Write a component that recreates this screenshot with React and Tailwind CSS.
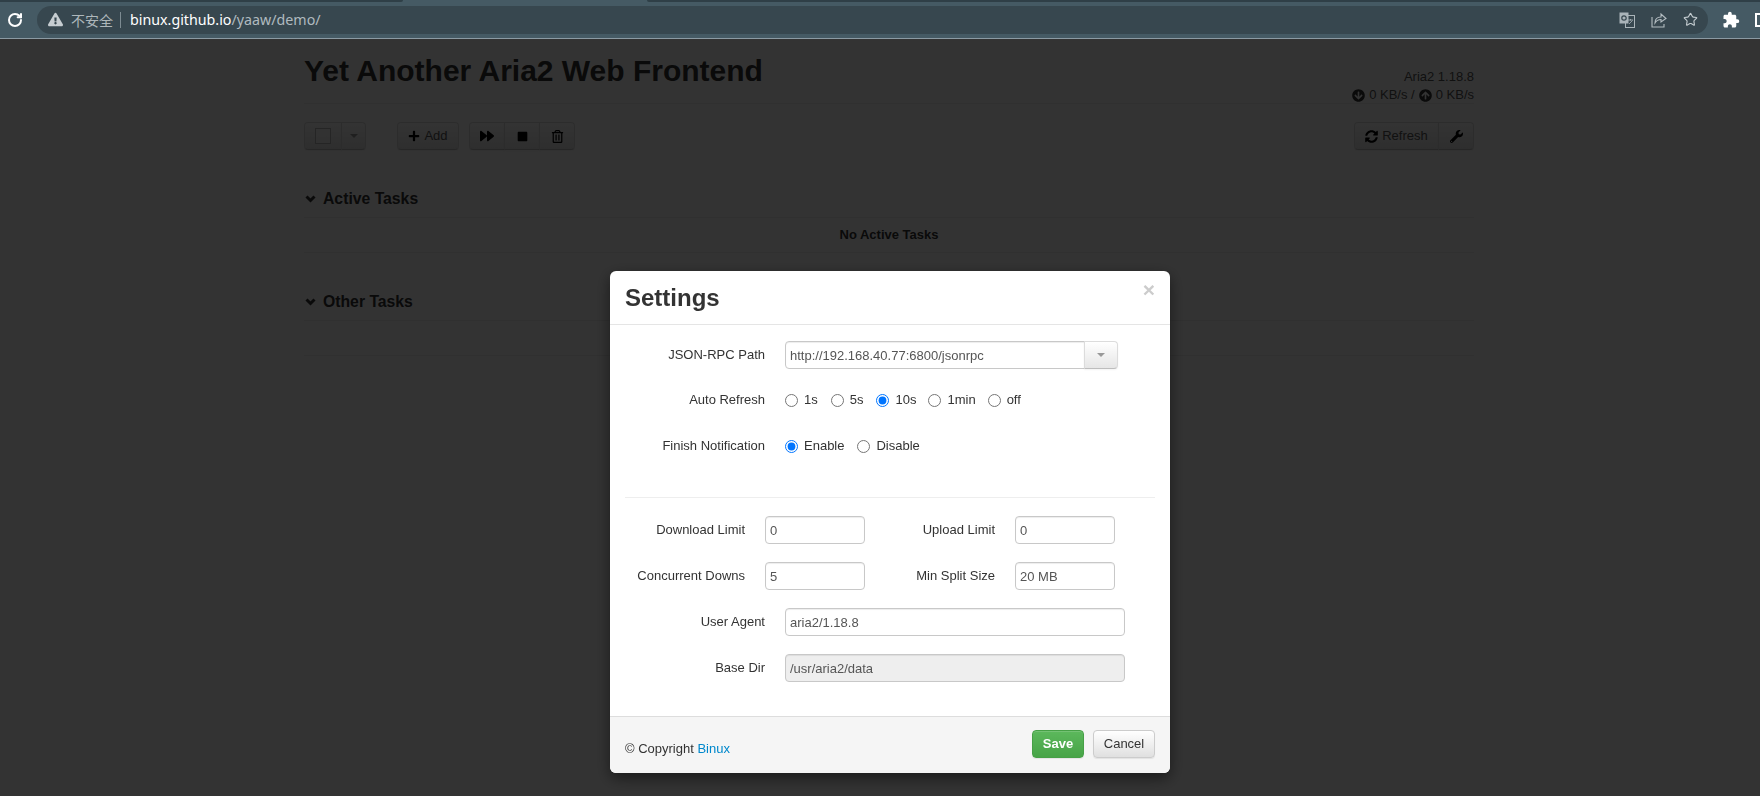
import { RotateCw, Star } from 'lucide-react'
import {
  FaArrowCircleDown,
  FaArrowCircleUp,
  FaExclamationTriangle,
  FaForward,
  FaPlus,
  FaRegTrashAlt,
  FaStop,
  FaSyncAlt,
  FaWrench,
} from 'react-icons/fa'
import { MdExtension } from 'react-icons/md'

const btn =
  'h-[28px] flex items-center justify-center border border-[#dcdcdc] border-b-[#bdbdbd] bg-gradient-to-b from-white to-[#e6e6e6] text-[#555] text-[13px] shadow-[inset_0_1px_0_rgba(255,255,255,0.2),0_1px_2px_rgba(0,0,0,0.05)]'

function Caret() {
  return <span className="w-0 h-0 border-x-[4px] border-x-transparent border-t-[4px] border-t-[#999]" />
}

function BrowserBar() {
  return (
    <div className="relative z-20 h-[39px] bg-[#455a64] border-b border-[#8b9aa3] flex flex-col">
      <div className="h-[2px] flex justify-between shrink-0">
        <div className="w-[403px] bg-[#2f3f47] rounded-br-md" />
        <div className="w-[1113px] bg-[#2f3f47] rounded-bl-md" />
      </div>
      <div className="flex items-center flex-1 min-h-0 pb-[1px]">
        <div className="w-[37px] flex justify-start pl-[7px] shrink-0">
          <RotateCw size={16} strokeWidth={3} className="text-white" />
        </div>
        <div className="w-[1671px] h-[28px] rounded-full bg-[#37474f] flex items-center pl-[11px] pr-[8px] shrink-0">
          <FaExclamationTriangle size={15} className="text-[#c6cdd1] mr-[8px]" />
          <span className="text-[14px] text-[#aeb7bb] font-['Noto_Sans_CJK_SC',sans-serif] mr-[7px] leading-none">不安全</span>
          <span className="w-px h-[16px] bg-[#7d8b92] mr-[9px]" />
          <span className="text-[14.25px] text-white font-['Noto_Sans',sans-serif]">binux.github.io</span>
          <span className="text-[14.25px] text-[#b0babf] font-['Noto_Sans',sans-serif]">/yaaw/demo/</span>
          <div className="ml-auto flex items-center gap-[16px] pr-[2px]">
            <svg width="16" height="16" viewBox="0 0 16 16" className="text-[#aab4b9]">
              <rect x="0.5" y="0.5" width="9" height="11" fill="currentColor" />
              <rect x="6.5" y="3.5" width="9" height="12" fill="none" stroke="currentColor" />
              <circle cx="5" cy="6" r="2.2" fill="none" stroke="#37474f" strokeWidth="1.2" />
              <path d="M9 8h5M11.5 7v1.5M10 12l3.5-3.5" stroke="currentColor" strokeWidth="0.8" fill="none" />
            </svg>
            <svg width="16" height="16" viewBox="0 0 16 16" fill="none" stroke="#b4bdc2" strokeWidth="1.1">
              <path d="M1 5v10h12v-3" />
              <path d="M4 11c0-4 2.5-6 6-6V2l5 4.500L10 10V7.500C7.500 7.500 5.500 8.500 4 11z" />
            </svg>
            <Star size={15} strokeWidth={1.8} className="text-[#c3cbcf]" />
          </div>
        </div>
        <div className="ml-[14px] shrink-0">
          <MdExtension size={18} className="text-white" />
        </div>
        <div className="ml-[15px] w-[12px] h-[14px] border-2 border-white shrink-0" />
      </div>
    </div>
  )
}

function TaskSection({ title, empty }) {
  return (
    <section className="mb-[39px]">
      <div className="h-[29px] flex items-start border-b border-[#eee]">
        <svg width="11" height="9" viewBox="0 0 11 9" fill="none" className="mt-[6px] ml-[1px] mr-[7px]">
          <path d="M1.500 1.500L5.500 5.500L9.500 1.500" stroke="#333" strokeWidth="3" />
        </svg>
        <h3 className="text-[15.75px] font-bold text-[#333] leading-[20px]">{title}</h3>
      </div>
      <div className="h-[35px] flex items-center justify-center border-b border-[#eee] text-[13px] font-bold text-[#333]">
        {empty}
      </div>
    </section>
  )
}

function BackgroundPage() {
  return (
    <div className="ml-[304px] w-[1170px]">
      <header className="h-[65px] border-b border-[#eee] flex justify-between">
        <h1 className="text-[30px] font-bold text-[#333] leading-[36px] mt-[14px]">Yet Another Aria2 Web Frontend</h1>
        <div className="text-right text-[13px] leading-[18px] text-[#555] pt-[29px]">
          <div>Aria2 1.18.8</div>
          <div className="flex items-center justify-end">
            <FaArrowCircleDown size={13} className="mr-[4px] text-[#333]" />0 KB/s /
            <FaArrowCircleUp size={13} className="mx-[4px] text-[#333]" />0 KB/s
          </div>
        </div>
      </header>

      <div className="mt-[18px] flex h-[28px]">
        <div className="flex">
          <div className={`${btn} w-[38px] rounded-l-[4px]`}>
            <span className="w-[16px] h-[16px] border border-[#bbb] bg-white/40" />
          </div>
          <div className={`${btn} w-[25px] -ml-px rounded-r-[4px]`}>
            <Caret />
          </div>
        </div>
        <button className={`${btn} w-[62px] ml-[31px] rounded-[4px] gap-[4px]`}>
          <FaPlus size={12} className="text-black" />
          Add
        </button>
        <div className="flex ml-[10px]">
          <button className={`${btn} w-[36px] rounded-l-[4px]`}>
            <FaForward size={14} className="text-black" />
          </button>
          <button className={`${btn} w-[36px] -ml-px`}>
            <FaStop size={11} className="text-black" />
          </button>
          <button className={`${btn} w-[36px] -ml-px rounded-r-[4px]`}>
            <FaRegTrashAlt size={13} className="text-black" />
          </button>
        </div>
        <div className="flex ml-auto">
          <button className={`${btn} w-[85px] rounded-l-[4px] gap-[4px]`}>
            <FaSyncAlt size={13} className="text-black" />
            Refresh
          </button>
          <button className={`${btn} w-[36px] -ml-px rounded-r-[4px]`}>
            <FaWrench size={13} className="text-black" />
          </button>
        </div>
      </div>

      <div className="mt-[39px]">
        <TaskSection title="Active Tasks" empty="No Active Tasks" />
        <TaskSection title="Other Tasks" empty="" />
      </div>
    </div>
  )
}

const inputCls =
  'h-[28px] border border-[#c8c8c8] rounded-[4px] px-[4px] text-[13px] text-[#555] shadow-[inset_0_1px_1px_rgba(0,0,0,0.075)] outline-none'

function Field({ label, value, labelW = 'w-[140px]', inputW = 'w-[340px]', disabled }) {
  return (
    <div className="flex items-center h-[28px]">
      <label className={`${labelW} text-right text-[13px] text-[#333] shrink-0 mr-[20px]`}>{label}</label>
      <input
        readOnly
        disabled={disabled}
        value={value}
        className={`${inputCls} ${inputW} ${disabled ? 'bg-[#eee]' : 'bg-white'}`}
      />
    </div>
  )
}

function RadioRow({ label, name, options, checked, gaps }) {
  return (
    <div className="flex items-center h-[28px]">
      <label className="w-[140px] text-right text-[13px] text-[#333] shrink-0 mr-[20px]">{label}</label>
      {options.map((o, i) => (
        <label key={o} className="flex items-center text-[13px] text-[#333]" style={{ marginRight: gaps[i] }}>
          <input type="radio" name={name} readOnly checked={o === checked} className="w-[13px] h-[13px] m-0 mr-[6px]" />
          {o}
        </label>
      ))}
    </div>
  )
}

function SettingsModal() {
  return (
    <div className="fixed z-10 top-[271px] left-[610px] w-[560px] bg-white rounded-[6px] shadow-[0_5px_15px_rgba(0,0,0,0.5)] overflow-hidden">
      <div className="relative h-[54px] border-b border-[#e5e5e5] px-[15px] flex items-center">
        <h3 className="text-[24px] font-bold text-[#333] leading-none">Settings</h3>
        <button className="absolute right-[15px] top-[8px] text-[21px] font-bold leading-none text-[#ccc]">×</button>
      </div>

      <div className="px-[15px] pt-[16px] pb-[34px]">
        <div className="flex items-center h-[28px]">
          <label className="w-[140px] text-right text-[13px] text-[#333] shrink-0 mr-[20px]">JSON-RPC Path</label>
          <div className="flex w-[333px]">
            <input
              readOnly
              value="http://192.168.40.77:6800/jsonrpc"
              className={`${inputCls} bg-white flex-1 min-w-0 rounded-r-none`}
            />
            <div className={`${btn} w-[34px] -ml-px rounded-r-[4px]`}>
              <Caret />
            </div>
          </div>
        </div>
        <div className="mt-[17px]">
          <RadioRow
            label="Auto Refresh"
            name="refresh"
            options={['1s', '5s', '10s', '1min', 'off']}
            checked="10s"
            gaps={[13, 13, 12, 12, 0]}
          />
        </div>
        <div className="mt-[18px]">
          <RadioRow
            label="Finish Notification"
            name="notify"
            options={['Enable', 'Disable']}
            checked="Enable"
            gaps={[13, 0]}
          />
        </div>

        <hr className="mt-[37px] mb-[18px] border-[#eee]" />

        <div className="flex flex-col gap-[18px]">
          <div className="flex items-center">
            <Field label="Download Limit" value="0" labelW="w-[120px]" inputW="w-[100px]" />
            <div className="ml-[10px]">
              <Field label="Upload Limit" value="0" labelW="w-[120px]" inputW="w-[100px]" />
            </div>
          </div>
          <div className="flex items-center">
            <Field label="Concurrent Downs" value="5" labelW="w-[120px]" inputW="w-[100px]" />
            <div className="ml-[10px]">
              <Field label="Min Split Size" value="20 MB" labelW="w-[120px]" inputW="w-[100px]" />
            </div>
          </div>
          <Field label="User Agent" value="aria2/1.18.8" />
          <Field label="Base Dir" value="/usr/aria2/data" disabled />
        </div>
      </div>

      <div className="h-[57px] border-t border-[#ddd] bg-[#f5f5f5] px-[15px] flex items-center justify-between">
        <p className="text-[13px] text-[#333] pt-[8px]">
          © Copyright <a className="text-[#0088cc]">Binux</a>
        </p>
        <div className="flex gap-[9px] -mt-[2px]">
          <button className="h-[28px] w-[52px] rounded-[4px] border border-[#46a046] bg-gradient-to-b from-[#5cb85c] to-[#47a447] text-white text-[13px] font-bold shadow-[inset_0_1px_0_rgba(255,255,255,0.15),0_1px_1px_rgba(0,0,0,0.075)]">
            Save
          </button>
          <button className="h-[28px] w-[62px] rounded-[4px] border border-[#ccc] bg-gradient-to-b from-white to-[#e0e0e0] text-[#333] text-[13px] shadow-[inset_0_1px_0_rgba(255,255,255,0.15),0_1px_1px_rgba(0,0,0,0.075)]">
            Cancel
          </button>
        </div>
      </div>
    </div>
  )
}

export default function App() {
  return (
    <div className="h-[796px] overflow-hidden bg-white font-['Liberation_Sans',Arial,sans-serif]">
      <BrowserBar />
      <BackgroundPage />
      {/* Modal backdrop, starts under the browser bar */}
      <div className="fixed inset-x-0 bottom-0 top-[39px] bg-black/80" />
      <SettingsModal />
    </div>
  )
}
